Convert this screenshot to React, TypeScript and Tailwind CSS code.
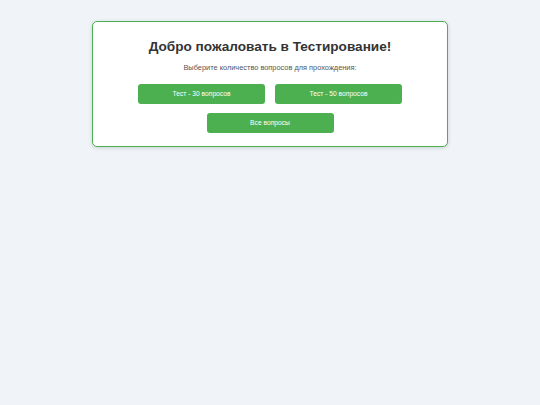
import React from 'react';

const options = ['Тест - 30 вопросов', 'Тест - 50 вопросов'];

export default function App() {
  return (
    <div className="min-h-[405px] w-full bg-[#f0f4f8] pt-[21px] font-['Liberation_Sans',Arial,sans-serif]">
      <div className="mx-auto w-[356px] rounded-[5px] border border-[#4caf50] bg-white px-[10px] pt-[16px] pb-[13px] shadow-[0_1px_4px_rgba(0,0,0,0.15)]">
        <h1 className="text-center text-[13.6px] font-bold leading-[17px] text-[#333]">
          Добро пожаловать в Тестирование!
        </h1>
        <p className="mt-[8px] text-center text-[7.4px] leading-[10px] text-[#555]">
          Выберите количество вопросов для прохождения:
        </p>
        <div className="mt-[11px] flex justify-center gap-[10px]">
          {options.map((label) => (
            <button
              key={label}
              className="h-[20px] w-[127px] rounded-[3px] bg-[#4caf50] text-[6.7px] text-white"
            >
              {label}
            </button>
          ))}
        </div>
        <div className="mt-[9px] flex justify-center">
          <button className="h-[20px] w-[127px] rounded-[3px] bg-[#4caf50] text-[6.7px] text-white">
            Все вопросы
          </button>
        </div>
      </div>
    </div>
  );
}
